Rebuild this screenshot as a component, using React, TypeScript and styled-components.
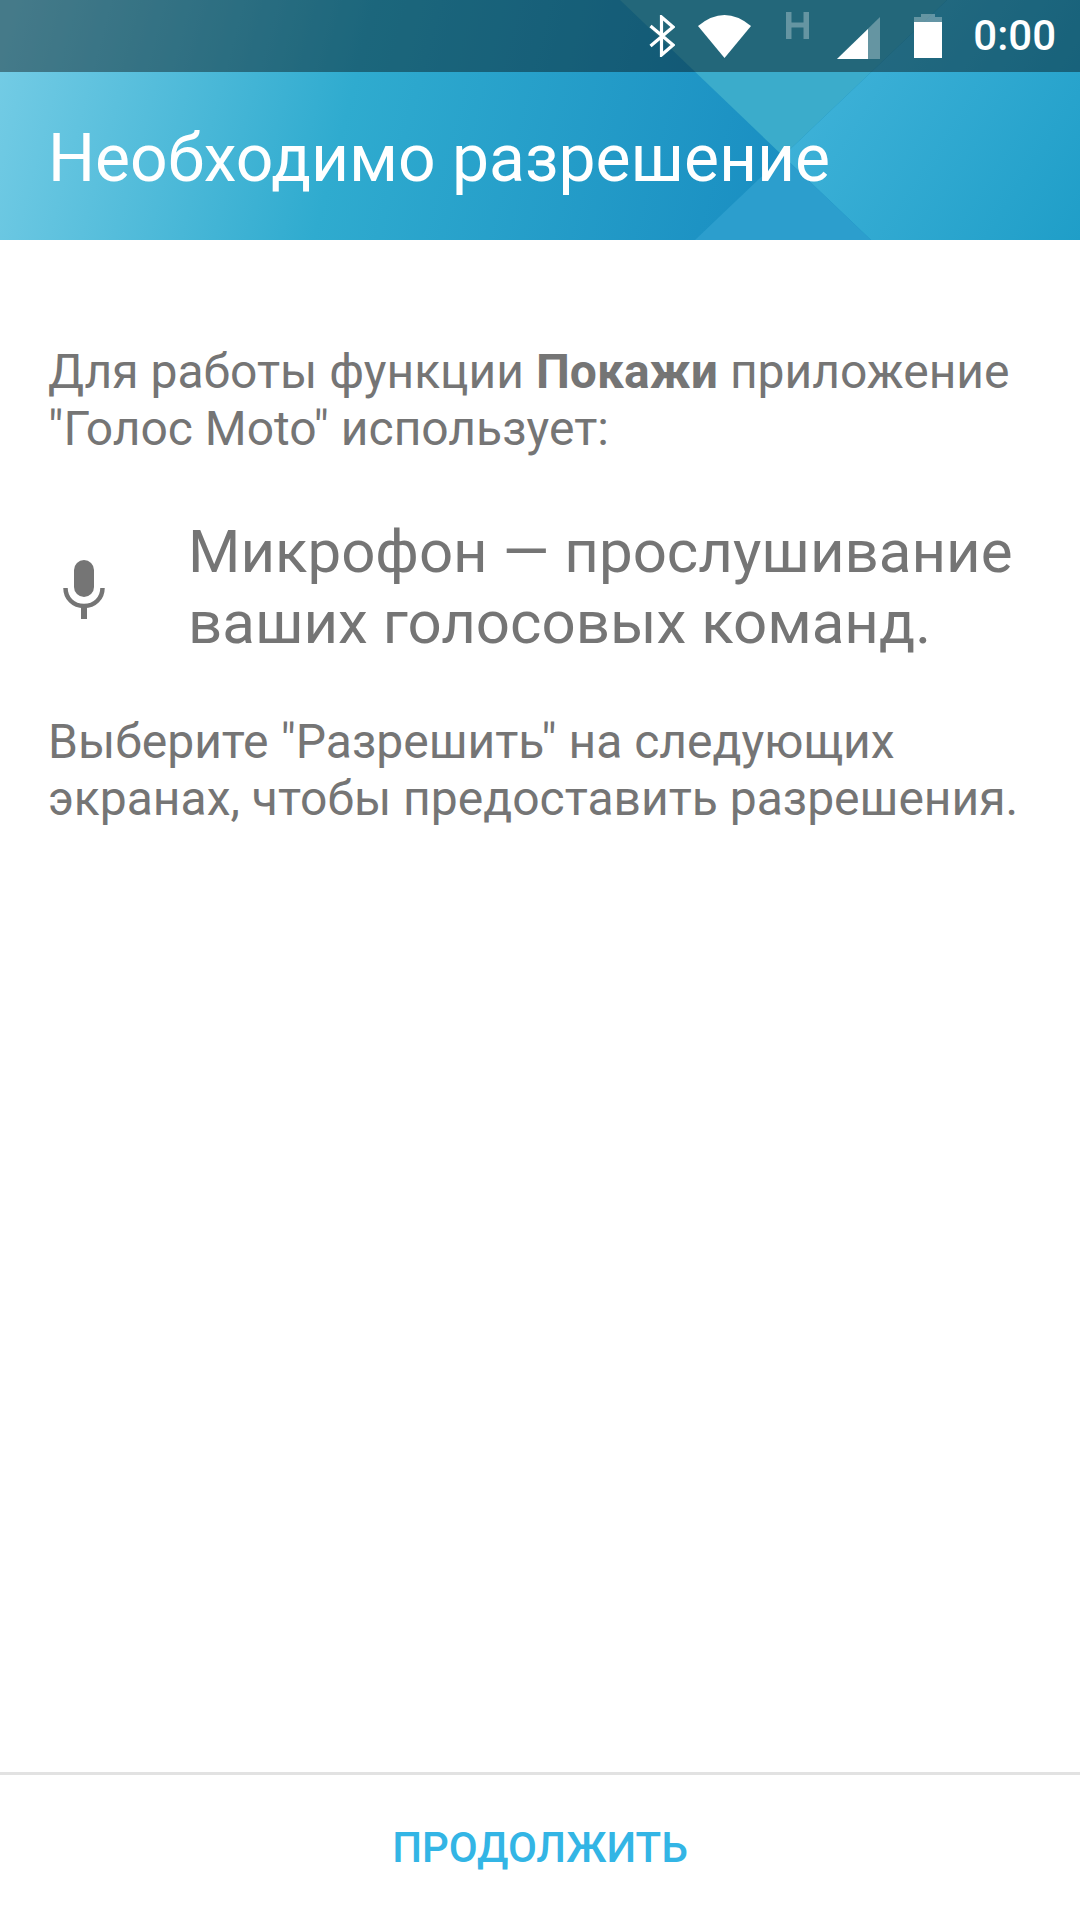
import React from "react";
import styled, { createGlobalStyle } from "styled-components";

const Global = createGlobalStyle`
  html, body { margin: 0; padding: 0; background: #fff; }
  #root { width: 1080px; height: 1920px; }
`;

const Screen = styled.div`
  width: 1080px;
  height: 1920px;
  display: flex;
  flex-direction: column;
  background: #fff;
  font-family: Roboto, "Noto Sans", sans-serif;
  color: #757575;
`;

const Hero = styled.header`
  position: relative;
  height: 240px;
  display: flex;
  flex-direction: column;
  overflow: hidden;
`;

const Art = styled.svg`
  position: absolute;
  inset: 0;
`;

const StatusBar = styled.div`
  position: relative;
  height: 72px;
  display: flex;
  align-items: center;
  justify-content: flex-end;
  padding-right: 24px;
  background: rgba(0, 0, 0, 0.4);
`;

const StatusIcon = styled.svg<{ $gap?: number; $shift?: number }>`
  display: block;
  flex: none;
  margin-right: ${(p) => p.$gap ?? 0}px;
  margin-top: ${(p) => p.$shift ?? 0}px;
`;

const Clock = styled.span`
  font-size: 42px;
  font-weight: 500;
  color: #fff;
  margin-left: 31px;
  line-height: 72px;
`;

const Title = styled.h1`
  position: relative;
  flex: 1;
  margin: 0;
  padding: 4px 0 0 48px;
  display: flex;
  align-items: center;
  font-size: 66px;
  font-weight: 400;
  color: #fff;
`;

const Content = styled.main`
  flex: 1;
  padding: 103px 48px 0;
  display: flex;
  flex-direction: column;
`;

const Paragraph = styled.p`
  margin: 0;
  font-size: 48px;
  line-height: 57px;
  white-space: nowrap;
`;

const PermissionRow = styled.div`
  display: flex;
  align-items: center;
  margin: 59px 0 55px;
`;

const MicSlot = styled.div`
  width: 140px;
  flex: none;
  display: flex;
  padding: 4px 0 0 15px;
  box-sizing: border-box;
`;

const PermissionText = styled.div`
  font-size: 60px;
  line-height: 71px;
  white-space: nowrap;
`;

const Footer = styled.footer`
  height: 145px;
  border-top: 3px solid #e2e2e2;
  display: flex;
  align-items: center;
  justify-content: center;
`;

const ContinueButton = styled.button`
  border: 0;
  padding: 0;
  background: none;
  font-family: inherit;
  font-size: 42px;
  font-weight: 500;
  color: #33b5e5;
`;

export default function App() {
  return (
    <Screen>
      <Global />
      <Hero>
        <Art width="1080" height="240" viewBox="0 0 1080 240">
          <defs>
            <linearGradient id="base" gradientUnits="userSpaceOnUse" x1="0" y1="40" x2="760" y2="240">
              <stop offset="0" stopColor="#74cce5" />
              <stop offset="0.45" stopColor="#2fabcf" />
              <stop offset="1" stopColor="#1a8fc2" />
            </linearGradient>
            <linearGradient id="right" gradientUnits="userSpaceOnUse" x1="800" y1="60" x2="1080" y2="240">
              <stop offset="0" stopColor="#40b3d9" />
              <stop offset="1" stopColor="#1f9ec8" />
            </linearGradient>
          </defs>
          <rect width="1080" height="240" fill="url(#base)" />
          <polygon points="947,0 1080,0 1080,240 871,240 783,156" fill="url(#right)" />
          <polygon points="620,0 947,0 783,156" fill="#3baccb" />
          <polygon points="783,156 871,240 695,240" fill="#2c9ecd" />
        </Art>
        <StatusBar>
          <StatusIcon $gap={23} width="26" height="42" viewBox="0 0 26 42">
            <path d="M1.5 11 L24 30 L12.5 40 V2 L24 12 L1.5 31" fill="none" stroke="#fff" strokeWidth="3.2" />
          </StatusIcon>
          <StatusIcon $gap={35} width="53" height="43" viewBox="0 0 53 43">
            <path d="M26.5 43 L0 11 Q26.5 -11 53 11 Z" fill="#fff" />
          </StatusIcon>
          <StatusIcon $gap={28} $shift={-21} width="23" height="27" viewBox="0 0 23 27">
            <path d="M0 0 H5.5 V10.5 H17.5 V0 H23 V27 H17.5 V15.5 H5.5 V27 H0 Z" fill="#fff" fillOpacity="0.3" />
          </StatusIcon>
          <StatusIcon $gap={34} $shift={4} width="43" height="42" viewBox="0 0 43 42">
            <polygon points="0,42 43,0 43,42" fill="#fff" fillOpacity="0.3" />
            <polygon points="0,42 31,12 31,42" fill="#fff" />
          </StatusIcon>
          <StatusIcon width="28" height="44" viewBox="0 0 28 44">
            <path d="M7 0 H21 V3 H28 V8 H0 V3 H7 Z" fill="#fff" fillOpacity="0.3" />
            <rect x="0" y="8" width="28" height="36" fill="#fff" />
          </StatusIcon>
          <Clock>0:00</Clock>
        </StatusBar>
        <Title>Необходимо разрешение</Title>
      </Hero>
      <Content>
        <Paragraph>
          Для работы функции <b>Покажи</b> приложение
          <br />
          "Голос Moto" использует:
        </Paragraph>
        <PermissionRow>
          <MicSlot>
            <svg width="42" height="59" viewBox="0 0 42 59">
              <rect x="11" y="0" width="20" height="37" rx="10" fill="#757575" />
              <path d="M2.5 28 C2.5 38 10 46 21 46 C32 46 39.5 38 39.5 28" fill="none" stroke="#757575" strokeWidth="4.5" />
              <rect x="18" y="45" width="6" height="14" fill="#757575" />
            </svg>
          </MicSlot>
          <PermissionText>
            Микрофон — прослушивание
            <br />
            ваших голосовых команд.
          </PermissionText>
        </PermissionRow>
        <Paragraph>
          Выберите "Разрешить" на следующих
          <br />
          экранах, чтобы предоставить разрешения.
        </Paragraph>
      </Content>
      <Footer>
        <ContinueButton>ПРОДОЛЖИТЬ</ContinueButton>
      </Footer>
    </Screen>
  );
}
